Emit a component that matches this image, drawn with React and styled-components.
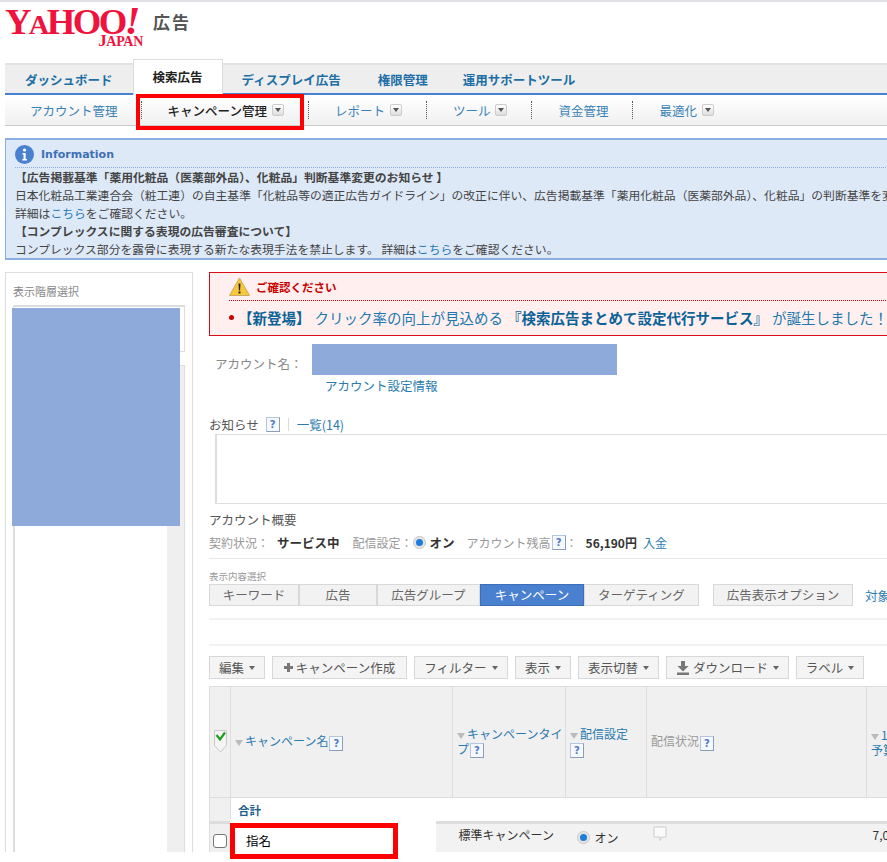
import React from 'react';
import styled, { createGlobalStyle } from 'styled-components';

const Global = createGlobalStyle`
  html, body { margin: 0; padding: 0; background: #fff; }
  body {
    font-family: "Noto Sans CJK JP", "Liberation Sans", sans-serif;
    font-size: 12px;
    color: #555;
  }
`;

const Frame = styled.div`
  position: relative;
  width: 887px;
  height: 862px;
  overflow: hidden;
  background: #fff;
`;

const Page = styled.div`
  width: 887px;
  height: 852px;
  overflow: hidden;
`;

const TopBar = styled.header`
  box-sizing: border-box;
  height: 59px;
  border-top: 2px solid #e2e2e6;
  padding: 6px 0 0 5px;
  display: flex;
  align-items: flex-start;
  gap: 5px;
`;

const Logo = styled.div`
  width: 143px;
  height: 38px;
  display: flex;
  flex-direction: column;
  align-items: flex-end;
  font-family: "Liberation Serif", serif;
  font-weight: 700;
  color: #f0123c;
`;

const LogoMain = styled.div`
  height: 26px;
  width: 143px;
  line-height: 26px;
  font-size: 36px;
  letter-spacing: -2.6px;
  white-space: nowrap;
  transform: scaleX(1.02);
  transform-origin: left;
  span { font-size: 28px; }
  i { font-size: 40px; font-style: italic; }
`;

const LogoSub = styled.div`
  height: 13px;
  line-height: 13px;
  margin-right: 5px;
  font-size: 14px;
  letter-spacing: -0.3px;
  span { font-size: 17px; }
`;

const LogoAds = styled.div`
  margin-top: 2px;
  font-size: 17px;
  line-height: 24px;
  font-weight: 700;
  letter-spacing: 2px;
  color: #555;
`;

const TabStrip = styled.nav`
  box-sizing: border-box;
  margin: 4px 0 0 5px;
  height: 32px;
  background: #eee;
  border-top: 2px solid #e2e2e2;
  border-bottom: 2px solid #4a80d2;
  display: flex;
`;

const Tab = styled.a`
  box-sizing: border-box;
  height: ${p => (p.$active ? '36px' : '28px')};
  margin-top: ${p => (p.$active ? '-6px' : '0')};
  padding: 0 ${p => p.$pad || 18}px;
  line-height: ${p => (p.$active ? '34px' : '30px')};
  font-weight: 700;
  font-size: 12.5px;
  white-space: nowrap;
  color: ${p => (p.$active ? '#222' : '#1d6fa5')};
  background: ${p => (p.$active ? '#fff' : 'transparent')};
  border: ${p => (p.$active ? '1px solid #ddd' : '0')};
  border-bottom: 0;
  position: relative;
`;

const SubNav = styled.nav`
  box-sizing: border-box;
  margin-left: 5px;
  height: 31px;
  background: linear-gradient(#fff, #f0f0f0);
  border-bottom: 1px solid #ccc;
  display: flex;
  align-items: center;
`;

const SubItem = styled.a`
  height: 18px;
  line-height: 17px;
  padding: 0 24px 0 26px;
  display: flex;
  align-items: center;
  gap: 5px;
  font-size: 12.5px;
  white-space: nowrap;
  color: ${p => (p.$current ? '#222' : '#3a83b6')};
  font-weight: ${p => (p.$current ? 500 : 400)};
  border-left: 1px dotted #555;
  &:first-child { border-left: 0; padding-left: 25px; padding-right: 23px; }
`;

const MenuBox = styled.span`
  box-sizing: border-box;
  width: 12px;
  height: 12px;
  border: 1px solid #ccc;
  border-radius: 2px;
  background: linear-gradient(#fff, #ddd);
  display: inline-flex;
  align-items: center;
  justify-content: center;
  &::after {
    content: '';
    border-left: 3px solid transparent;
    border-right: 3px solid transparent;
    border-top: 4px solid #555;
  }
`;

const InfoBox = styled.section`
  box-sizing: border-box;
  margin: 12px 0 0 5px;
  width: 1100px;
  height: 122px;
  padding: 3px 0 0 9px;
  background: #dee9f8;
  border: 1px solid #8aaee0;
  border-top-width: 2px;
  border-bottom-width: 2px;
`;

const InfoHead = styled.div`
  height: 23px;
  display: flex;
  align-items: center;
  gap: 7px;
  border-bottom: 1px dotted #8aaee0;
  padding-bottom: 1px;
  font-family: "DejaVu Sans", sans-serif;
  font-size: 11px;
  font-weight: 700;
  color: #3f70b4;
`;

const InfoLine = styled.div`
  height: 18px;
  line-height: 18px;
  white-space: nowrap;
  font-size: 11.8px;
  color: #444;
  font-weight: ${p => (p.$bold ? 700 : 400)};
  a { color: #1d78b0; }
`;

const Columns = styled.div`
  margin: 12px 0 0 5px;
  display: flex;
  align-items: flex-start;
  gap: 16px;
`;

const Side = styled.aside`
  box-sizing: border-box;
  flex: none;
  width: 188px;
  height: 590px;
  padding: 10px 7px 0 7px;
  border: 1px solid #ddd;
`;

const SideLabel = styled.div`
  height: 22px;
  line-height: 16px;
  font-size: 11px;
  color: #888;
`;

const SideTree = styled.div`
  box-sizing: border-box;
  height: 47px;
  border: 1px solid #ddd;
  border-top-width: 2px;
  background: #fff;
`;

const SideList = styled.div`
  box-sizing: border-box;
  margin-top: 13px;
  height: 520px;
  border: 1px solid #ddd;
  border-left: 2px solid #ddd;
  display: flex;
  justify-content: flex-end;
`;

const SideScroll = styled.div`
  width: 17px;
  background: #efefef;
`;

const Main = styled.main`
  flex: none;
  width: 1100px;
`;

const Alert = styled.section`
  box-sizing: border-box;
  height: 64px;
  padding: 0 0 0 19px;
  background: #fff0ef;
  border: 1px solid #d80c18;
`;

const AlertHead = styled.div`
  height: 27px;
  display: flex;
  align-items: center;
  gap: 6px;
  border-bottom: 1px dotted #c00;
  font-size: 11.5px;
  font-weight: 700;
  color: #c80000;
`;

const AlertBody = styled.div`
  height: 33px;
  line-height: 31px;
  display: flex;
  align-items: center;
  gap: 4px;
  white-space: nowrap;
  font-size: 14.5px;
  color: #2178ae;
  &::before {
    content: '';
    width: 5px;
    height: 5px;
    margin-right: 0;
    border-radius: 50%;
    background: #c80000;
  }
  b { font-weight: 700; color: #0c6397; }
`;

const AccountRow = styled.div`
  margin-top: 19px;
  height: 18px;
  line-height: 18px;
  padding-left: 6px;
  font-size: 12.5px;
  color: #888;
`;

const AccountLink = styled.a`
  display: block;
  margin-top: 4px;
  height: 18px;
  line-height: 18px;
  padding-left: 116px;
  font-size: 12.5px;
  color: #2b7bb0;
`;

const NoticeRow = styled.div`
  margin-top: 20px;
  height: 18px;
  display: flex;
  align-items: center;
  gap: 7px;
  font-size: 12.5px;
  color: #555;
  a {
    margin-left: 1px;
    padding-left: 8px;
    border-left: 1px solid #e3d8d8;
    line-height: 13px;
    color: #2b7bb0;
  }
`;

const NoticeBox = styled.div`
  box-sizing: border-box;
  margin: 1px 0 0 6px;
  height: 70px;
  border: 1px solid #ddd;
  border-width: 1px 1px 1px 2px;
`;

const SubTitle = styled.div`
  margin-top: 7px;
  height: 18px;
  line-height: 18px;
  font-size: 12.5px;
  color: #555;
`;

const StatusRow = styled.div`
  margin-top: 4px;
  height: 18px;
  padding-bottom: 7px;
  border-bottom: 1px solid #e8e8e8;
  display: flex;
  align-items: center;
  font-size: 12px;
  color: #999;
  white-space: nowrap;
`;

const Value = styled.b`
  margin: ${p => p.$m || '0 13px 0 8px'};
  font-weight: 700;
  color: #333;
  font-size: ${p => (p.$num ? '12px' : '12.5px')};
`;

const StatusLink = styled.a`
  margin-left: 6px;
  color: #2b7bb0;
`;

const SectionLabel = styled.div`
  margin-top: 10px;
  height: 15px;
  line-height: 14px;
  font-size: 9.5px;
  color: #999;
`;

const ViewRow = styled.div`
  height: 22px;
  display: flex;
  align-items: center;
  padding-bottom: 12px;
  border-bottom: 2px solid #f2f2f2;
`;

const ViewBtn = styled.a`
  box-sizing: border-box;
  flex: none;
  width: ${p => p.$w}px;
  height: 22px;
  line-height: 20px;
  text-align: center;
  font-size: 12.5px;
  white-space: nowrap;
  color: ${p => (p.$on ? '#fff' : '#666')};
  background: ${p => (p.$on ? '#4a80d0' : '#f2f2f2')};
  border: 1px solid ${p => (p.$on ? '#3d6fb8' : '#d8d8d8')};
  margin-left: ${p => p.$gap || 0}px;
`;

const ViewNext = styled.a`
  margin-left: 12px;
  font-size: 12.5px;
  color: #2b7bb0;
  white-space: nowrap;
`;

const BlankRow = styled.div`
  height: 24px;
  border-bottom: 2px solid #f2f2f2;
`;

const ToolBar = styled.div`
  margin-top: 10px;
  height: 23px;
  display: flex;
  gap: 7px;
`;

const ToolBtn = styled.a`
  box-sizing: border-box;
  flex: none;
  width: ${p => p.$w}px;
  height: 23px;
  display: flex;
  align-items: center;
  justify-content: center;
  gap: 3px;
  font-size: 12.5px;
  white-space: nowrap;
  color: #555;
  background: #f4f4f4;
  border: 1px solid #d8d8d8;
  &[data-caret]::after {
    content: '';
    margin-left: 2px;
    border-left: 3px solid transparent;
    border-right: 3px solid transparent;
    border-top: 4px solid #666;
  }
`;

const Table = styled.table`
  margin-top: 7px;
  width: 900px;
  table-layout: fixed;
  border-collapse: collapse;
  font-size: 12px;
  th, td { padding: 0; }
`;

const HeadCell = styled.th`
  height: 110px;
  padding: 0 0 0 4px !important;
  background: #f0f0f0;
  border: 1px solid #ddd;
  text-align: left;
  font-weight: 400;
  line-height: 15px;
  color: ${p => (p.$muted ? '#999' : '#2b7bb0')};
`;

const SortMark = styled.span`
  display: inline-block;
  margin-right: 2px;
  border-left: 4px solid transparent;
  border-right: 4px solid transparent;
  border-top: 6px solid #bbb;
`;

const TotalLabel = styled.td`
  height: 23px;
  padding-left: 7px !important;
  font-size: 11.5px;
  font-weight: 700;
  color: #1f5f8a;
  background: #fff;
  border-bottom: 3px solid #ddd;
`;

const GreyCell = styled.td`
  background: #f0f0f0;
  border: 1px solid #ddd;
  border-bottom-width: ${p => (p.$thick ? 3 : 1)}px;
  text-align: center;
`;

const DataCell = styled.td`
  height: 30px;
  background: #f2f2f2;
  vertical-align: top;
  padding: 2px 0 0 6px !important;
  white-space: nowrap;
  color: #333;
`;

const RadioText = styled.span`
  display: inline-flex;
  align-items: center;
  gap: 5px;
  margin: 3px 0 0 5px;
`;

const Check = styled.span`
  display: block;
  box-sizing: border-box;
  width: 14px;
  height: 14px;
  margin: 2px 0 0 3px;
  background: #fff;
  border: 1px solid #777;
  border-radius: 3px;
`;

const HelpBox = styled.span`
  box-sizing: border-box;
  display: inline-block;
  width: 14px;
  height: 15px;
  margin-left: ${p => p.$m || 0}px;
  vertical-align: middle;
  border: 1px solid #b5c5e0;
  border-right-color: #8b9dbd;
  border-bottom-color: #8b9dbd;
  background: #f5f8fd;
  color: #4f78c8;
  font-family: "DejaVu Sans", sans-serif;
  font-size: 10px;
  font-weight: 700;
  line-height: 13px;
  text-align: center;
`;

const RadioDot = styled.span`
  box-sizing: border-box;
  display: inline-block;
  flex: none;
  width: 13px;
  height: 13px;
  margin-right: ${p => p.$m || 0}px;
  border-radius: 50%;
  background: #1c7ddb;
  border: 3px solid #e4e4e4;
  outline: 1px solid #ccc;
  outline-offset: -1px;
`;

/* red note marks and the blanked out account data lie over the page */
const Highlight = styled.div`
  position: absolute;
  box-sizing: border-box;
  border: 4px solid #f00;
`;

const NavHighlight = styled(Highlight)`
  left: 136px;
  top: 94px;
  width: 168px;
  height: 36px;
`;

const NamePatch = styled.div`
  position: absolute;
  left: 230px;
  top: 819px;
  width: 206px;
  height: 33px;
  background: #fff;
`;

const NameHighlight = styled(Highlight)`
  left: 230px;
  top: 823px;
  width: 168px;
  height: 36px;
  border-width: 5px;
  padding-left: 11px;
  line-height: 25px;
  font-size: 12.5px;
  color: #000;
`;

const Mask = styled.div`
  position: absolute;
  background: #8eaadb;
`;

const SideMask = styled(Mask)`
  left: 12px;
  top: 308px;
  width: 168px;
  height: 218px;
`;

const NameMask = styled(Mask)`
  left: 312px;
  top: 344px;
  width: 305px;
  height: 31px;
`;

const InfoIcon = () => (
  <svg width="19" height="19" viewBox="0 0 19 19">
    <circle cx="9.5" cy="9.5" r="9.5" fill="#4a80d0" />
    <circle cx="9.5" cy="5" r="1.6" fill="#fff" />
    <path d="M7.5 8h3.2v6h1.2v1.4H7.3V14h1.2V9.4h-1z" fill="#fff" />
  </svg>
);

const WarnIcon = () => (
  <svg width="21" height="20" viewBox="0 0 21 20">
    <path d="M10.5 1 20.5 18.5H.5z" fill="#f7c93a" stroke="#c9a860" strokeLinejoin="round" />
    <path d="M9.5 6.5h2l-.4 7h-1.2zM9.5 14.6h2v2h-2z" fill="#222" />
  </svg>
);

const PlusIcon = () => (
  <svg width="9" height="9" viewBox="0 0 9 9">
    <path d="M3 0h3v3h3v3H6v3H3V6H0V3h3z" fill="#777" />
  </svg>
);

const DownloadIcon = () => (
  <svg width="14" height="14" viewBox="0 0 14 14">
    <path d="M5 0h4v5h3.5L7 10.5 1.5 5H5zM1 11.5h12V14H1z" fill="#777" />
  </svg>
);

const ShieldCheck = () => (
  <svg width="13" height="23" viewBox="0 0 13 23">
    <path d="M.5.5h12v15L6.5 22 .5 15.500z" fill="#f4f4f4" stroke="#c8c8c8" />
    <path d="M2.500 5 6 9.500 11 2.500" fill="none" stroke="#1ca01c" strokeWidth="2.200" />
  </svg>
);

const BubbleIcon = () => (
  <svg width="14" height="16" viewBox="0 0 14 16">
    <path d="M1 1h12v10H9l-2 3.500V11H1z" fill="#fafafa" stroke="#ccc" />
  </svg>
);

export default function App() {
  return (
    <Frame>
      <Global />
      <Page>
        <TopBar>
          <Logo>
            <LogoMain>Y<span>A</span>HOO<i>!</i></LogoMain>
            <LogoSub><span>J</span>APAN</LogoSub>
          </Logo>
          <LogoAds>広告</LogoAds>
        </TopBar>
        <TabStrip>
          <Tab $pad={20}>ダッシュボード</Tab>
          <Tab $active $pad={19}>検索広告</Tab>
          <Tab $pad={19}>ディスプレイ広告</Tab>
          <Tab $pad={18}>権限管理</Tab>
          <Tab $pad={17}>運用サポートツール</Tab>
        </TabStrip>
        <SubNav>
          <SubItem>アカウント管理</SubItem>
          <SubItem $current>キャンペーン管理<MenuBox /></SubItem>
          <SubItem>レポート<MenuBox /></SubItem>
          <SubItem>ツール<MenuBox /></SubItem>
          <SubItem>資金管理</SubItem>
          <SubItem>最適化<MenuBox /></SubItem>
        </SubNav>
        <InfoBox>
          <InfoHead><InfoIcon />Information</InfoHead>
          <InfoLine $bold>【広告掲載基準「薬用化粧品（医薬部外品）、化粧品」判断基準変更のお知らせ 】</InfoLine>
          <InfoLine>日本化粧品工業連合会（粧工連）の自主基準「化粧品等の適正広告ガイドライン」の改正に伴い、広告掲載基準「薬用化粧品（医薬部外品）、化粧品」の判断基準を変更いたします。</InfoLine>
          <InfoLine>詳細は<a>こちら</a>をご確認ください。</InfoLine>
          <InfoLine $bold>【コンプレックスに関する表現の広告審査について】</InfoLine>
          <InfoLine>コンプレックス部分を露骨に表現する新たな表現手法を禁止します。 詳細は<a>こちら</a>をご確認ください。</InfoLine>
        </InfoBox>
        <Columns>
          <Side>
            <SideLabel>表示階層選択</SideLabel>
            <SideTree />
            <SideList><SideScroll /></SideList>
          </Side>
          <Main>
            <Alert>
              <AlertHead><WarnIcon />ご確認ください</AlertHead>
              <AlertBody><b>【新登場】</b>クリック率の向上が見込める<b>『検索広告まとめて設定代行サービス』</b>が誕生しました！サービス詳細はこちら</AlertBody>
            </Alert>
            <AccountRow>アカウント名：</AccountRow>
            <AccountLink>アカウント設定情報</AccountLink>
            <NoticeRow>お知らせ<HelpBox>?</HelpBox><a>一覧(14)</a></NoticeRow>
            <NoticeBox />
            <SubTitle>アカウント概要</SubTitle>
            <StatusRow>
              契約状況：<Value>サービス中</Value>
              配信設定：<RadioDot $m={4} /><Value $m="0 12px 0 0">オン</Value>
              アカウント残高<HelpBox $m={1}>?</HelpBox>：<Value $num $m="0 0 0 8px">56,190円</Value>
              <StatusLink>入金</StatusLink>
            </StatusRow>
            <SectionLabel>表示内容選択</SectionLabel>
            <ViewRow>
              <ViewBtn $w={90}>キーワード</ViewBtn>
              <ViewBtn $w={78}>広告</ViewBtn>
              <ViewBtn $w={103}>広告グループ</ViewBtn>
              <ViewBtn $w={104} $on>キャンペーン</ViewBtn>
              <ViewBtn $w={115}>ターゲティング</ViewBtn>
              <ViewBtn $w={140} $gap={14}>広告表示オプション</ViewBtn>
              <ViewNext>対象</ViewNext>
            </ViewRow>
            <BlankRow />
            <ToolBar>
              <ToolBtn $w={56} data-caret>編集</ToolBtn>
              <ToolBtn $w={135}><PlusIcon />キャンペーン作成</ToolBtn>
              <ToolBtn $w={94} data-caret>フィルター</ToolBtn>
              <ToolBtn $w={56} data-caret>表示</ToolBtn>
              <ToolBtn $w={81} data-caret>表示切替</ToolBtn>
              <ToolBtn $w={123} data-caret><DownloadIcon />ダウンロード</ToolBtn>
              <ToolBtn $w={68} data-caret>ラベル</ToolBtn>
            </ToolBar>
            <Table>
              <colgroup>
                <col width="21" />
                <col width="222" />
                <col width="113" />
                <col width="81" />
                <col width="220" />
                <col width="243" />
              </colgroup>
              <thead>
                <tr>
                  <HeadCell><ShieldCheck /></HeadCell>
                  <HeadCell><SortMark />キャンペーン名<HelpBox $m={1}>?</HelpBox></HeadCell>
                  <HeadCell><SortMark />キャンペーンタイプ<HelpBox $m={1}>?</HelpBox></HeadCell>
                  <HeadCell><SortMark />配信設定<br /><HelpBox>?</HelpBox></HeadCell>
                  <HeadCell $muted>配信状況<HelpBox $m={1}>?</HelpBox></HeadCell>
                  <HeadCell><SortMark />1日の<br />予算</HeadCell>
                </tr>
              </thead>
              <tbody>
                <tr>
                  <GreyCell $thick />
                  <TotalLabel colSpan={5}>合計</TotalLabel>
                </tr>
                <tr>
                  <GreyCell><Check /></GreyCell>
                  <DataCell />
                  <DataCell>標準キャンペーン</DataCell>
                  <DataCell><RadioText><RadioDot />オン</RadioText></DataCell>
                  <DataCell><BubbleIcon /></DataCell>
                  <DataCell>7,000</DataCell>
                </tr>
              </tbody>
            </Table>
          </Main>
        </Columns>
      </Page>
      <NavHighlight />
      <SideMask />
      <NameMask />
      <NamePatch />
      <NameHighlight>指名</NameHighlight>
    </Frame>
  );
}
